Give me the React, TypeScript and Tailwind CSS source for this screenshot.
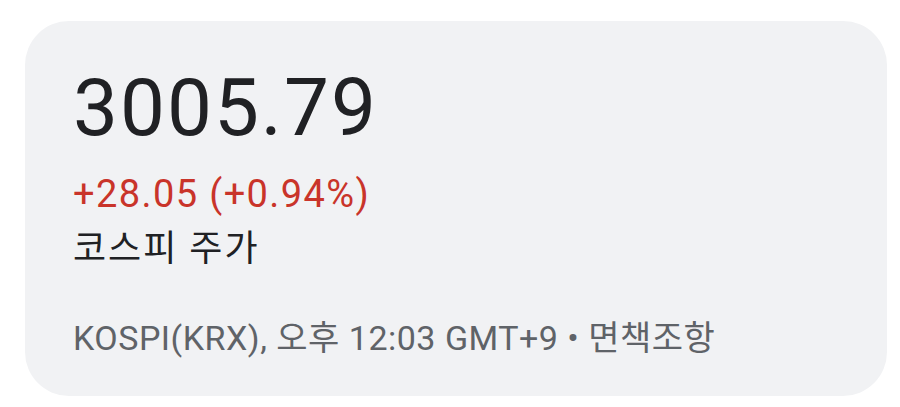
export default function App() {
  return (
    <div className="w-[900px] h-[407px] bg-white pt-[21px] pl-[25px]">
      <div
        className="w-[862px] h-[375px] rounded-[44px] bg-[#f1f2f4] pl-[48px] pt-[47px] flex flex-col"
        style={{ fontFamily: 'Roboto, "Noto Sans CJK KR", sans-serif' }}
      >
        {/* Price */}
        <div className="text-[80px] leading-[80px] text-[#202124] tracking-[2px]">
          3005.79
        </div>

        {/* Change */}
        <div className="mt-[26px] text-[38px] leading-[40px] text-[#c9342a] tracking-[1.4px]">
          +28.05 (+0.94%)
        </div>

        {/* Name */}
        <div className="mt-[14px] text-[36px] leading-[42px] text-[#202124] tracking-[2px]">
          코스피 주가
        </div>

        {/* Footer */}
        <div className="mt-[48px] text-[34px] leading-[40px] text-[#5f6368] tracking-[0.5px]">
          KOSPI(KRX), 오후 12:03 GMT+9 • 면책조항
        </div>
      </div>
    </div>
  );
}
